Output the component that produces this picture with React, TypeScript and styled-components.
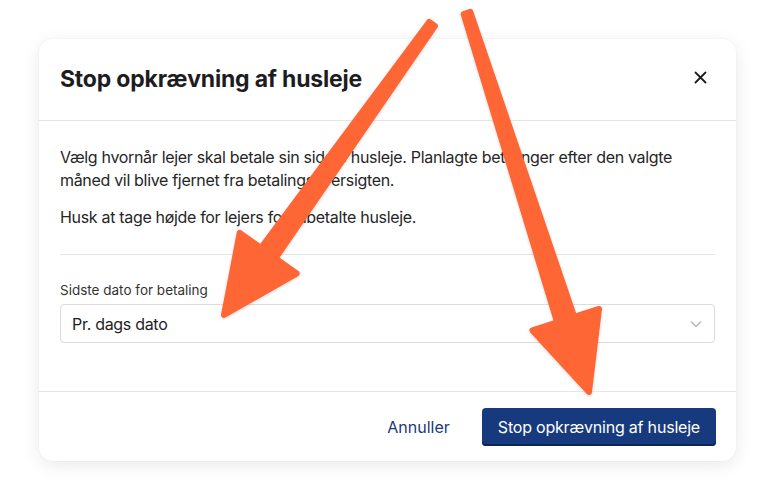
import React from "react"
import styled, { createGlobalStyle } from "styled-components"

const GlobalStyle = createGlobalStyle`
  html, body {
    margin: 0;
    padding: 0;
    background: #ffffff;
  }
  body {
    font-family: Inter, "Noto Sans", "Liberation Sans", sans-serif;
    color: #222222;
    -webkit-font-smoothing: antialiased;
  }
`

const Page = styled.div`
  position: relative;
  width: 775px;
  height: 500px;
  padding: 39px 39px 0 39px;
  box-sizing: border-box;
  overflow: hidden;
`

const Modal = styled.div`
  width: 697px;
  background: #ffffff;
  border-radius: 14px;
  box-shadow: 0 4px 18px rgba(0, 0, 0, 0.09), 0 0 2px rgba(0, 0, 0, 0.05);
  display: flex;
  flex-direction: column;
`

const Header = styled.div`
  height: 81px;
  display: flex;
  align-items: center;
  justify-content: space-between;
  padding: 0 24px 0 21px;
  border-bottom: 1px solid #e6e6e6;
`

const Title = styled.h2`
  margin: 0 0 2px 0;
  font-size: 23px;
  font-weight: 700;
  color: #1d1d1f;
  letter-spacing: -0.2px;
`

const CloseButton = styled.button`
  border: none;
  background: none;
  width: 24px;
  height: 24px;
  padding: 0;
  display: flex;
  align-items: center;
  justify-content: center;
  cursor: pointer;
  margin-top: -4px;
`

const Body = styled.div`
  padding: 25px 21px 48px 21px;
  display: flex;
  flex-direction: column;
`

const Text = styled.p<{ $last?: boolean }>`
  margin: 0 0 ${(p) => (p.$last ? "0" : "14px")} 0;
  font-size: 16px;
  line-height: 23px;
  letter-spacing: -0.32px;
  color: #262626;
`

const Divider = styled.hr`
  border: none;
  border-top: 1px solid #e6e6e6;
  margin: 25px 0 26px 0;
`

const Label = styled.label`
  font-size: 13.5px;
  line-height: 18px;
  color: #333333;
  margin-bottom: 5px;
`

const Select = styled.div`
  height: 39px;
  box-sizing: border-box;
  border: 1px solid #dcdcdc;
  border-radius: 4px;
  display: flex;
  align-items: center;
  justify-content: space-between;
  padding: 0 12px 0 11px;
  font-size: 16px;
  letter-spacing: -0.3px;
  color: #1d1d1f;
`

const Footer = styled.div`
  border-top: 1px solid #e6e6e6;
  padding: 16px 20px 15px 20px;
  display: flex;
  justify-content: flex-end;
  align-items: center;
  gap: 20px;
`

const Button = styled.button<{ $primary?: boolean }>`
  font-family: inherit;
  font-size: 16px;
  height: 38px;
  padding: 0 ${(p) => (p.$primary ? "16px" : "12px")};
  letter-spacing: ${(p) => (p.$primary ? "-0.2px" : "0")};
  border-radius: 4px;
  border: none;
  cursor: pointer;
  background: ${(p) => (p.$primary ? "#163a7d" : "transparent")};
  color: ${(p) => (p.$primary ? "#ffffff" : "#1c3a78")};
  box-shadow: ${(p) => (p.$primary ? "inset 0 -2px 0 #0b2556" : "none")};
`

const Overlay = styled.svg`
  position: absolute;
  left: 0;
  top: 0;
  pointer-events: none;
`

type Pt = [number, number]

function arrowPoints(
  tail: Pt,
  tip: Pt,
  tailW: number,
  neckW: number,
  headLen: number,
  headHalf: number
) {
  const dx = tip[0] - tail[0]
  const dy = tip[1] - tail[1]
  const len = Math.hypot(dx, dy)
  const ux = dx / len
  const uy = dy / len
  const nx = -uy
  const ny = ux
  const neck: Pt = [tip[0] - ux * headLen, tip[1] - uy * headLen]
  const pts: Pt[] = [
    [tail[0] + (nx * tailW) / 2, tail[1] + (ny * tailW) / 2],
    [neck[0] + (nx * neckW) / 2, neck[1] + (ny * neckW) / 2],
    [neck[0] + nx * headHalf, neck[1] + ny * headHalf],
    tip,
    [neck[0] - nx * headHalf, neck[1] - ny * headHalf],
    [neck[0] - (nx * neckW) / 2, neck[1] - (ny * neckW) / 2],
    [tail[0] - (nx * tailW) / 2, tail[1] - (ny * tailW) / 2],
  ]
  return pts.map((p) => p.join(",")).join(" ")
}

function Arrow({ tail, tip }: { tail: Pt; tip: Pt }) {
  return (
    <polygon
      points={arrowPoints(tail, tip, 7, 18, 76, 35)}
      fill="#fe6634"
      stroke="#fe6634"
      strokeWidth={6}
      strokeLinejoin="round"
    />
  )
}

export default function App() {
  return (
    <Page>
      <GlobalStyle />
      <Modal>
        <Header>
          <Title>Stop opkrævning af husleje</Title>
          <CloseButton aria-label="Luk">
            <svg width="13" height="13" viewBox="0 0 13 13">
              <path d="M1.5 1.5 L11.5 11.5 M11.5 1.5 L1.5 11.5" stroke="#1d1d1f" strokeWidth="1.8" strokeLinecap="round" />
            </svg>
          </CloseButton>
        </Header>
        <Body>
          <Text>
            Vælg hvornår lejer skal betale sin sidste husleje. Planlagte betalinger efter den valgte måned vil blive
            fjernet fra betalingsoversigten.
          </Text>
          <Text $last>Husk at tage højde for lejers forudbetalte husleje.</Text>
          <Divider />
          <Label>Sidste dato for betaling</Label>
          <Select>
            <span>Pr. dags dato</span>
            <svg width="12" height="8" viewBox="0 0 12 8">
              <path d="M1 1.5 L6 6.5 L11 1.5" fill="none" stroke="#b5b5b5" strokeWidth="1.3" />
            </svg>
          </Select>
        </Body>
        <Footer>
          <Button>Annuller</Button>
          <Button $primary>Stop opkrævning af husleje</Button>
        </Footer>
      </Modal>
      <Overlay width="775" height="500" viewBox="0 0 775 500">
        <defs>
          <filter id="arrowShadow" x="-20%" y="-20%" width="140%" height="140%">
            <feDropShadow dx="0" dy="1" stdDeviation="1.5" floodColor="#000" floodOpacity="0.15" />
          </filter>
        </defs>
        <g filter="url(#arrowShadow)">
          <Arrow tail={[432, 24]} tip={[224, 315]} />
          <Arrow tail={[467, 13]} tip={[589, 392]} />
        </g>
      </Overlay>
    </Page>
  )
}
